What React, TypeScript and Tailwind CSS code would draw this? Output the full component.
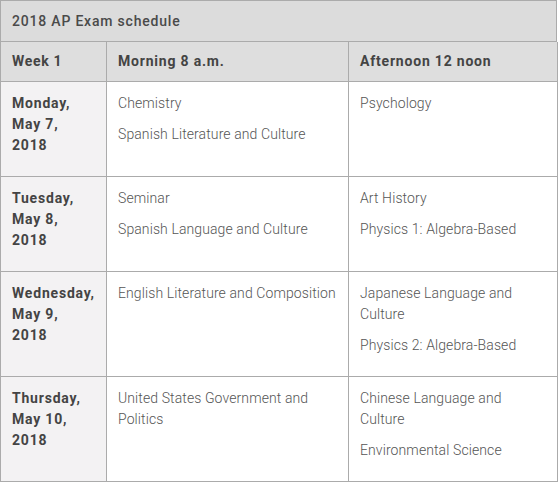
import React from "react";

const rows = [
  {
    day: ["Monday,", "May 7,", "2018"],
    am: ["Chemistry", "Spanish Literature and Culture"],
    pm: ["Psychology"],
  },
  {
    day: ["Tuesday,", "May 8,", "2018"],
    am: ["Seminar", "Spanish Language and Culture"],
    pm: ["Art History", "Physics 1: Algebra-Based"],
  },
  {
    day: ["Wednesday,", "May 9,", "2018"],
    am: ["English Literature and Composition"],
    pm: ["Japanese Language and Culture", "Physics 2: Algebra-Based"],
  },
  {
    day: ["Thursday,", "May 10,", "2018"],
    am: ["United States Government and Politics"],
    pm: ["Chinese Language and Culture", "Environmental Science"],
  },
];

export default function App() {
  return (
    <div
      className="w-[559px] h-[483px] bg-white text-[14px] leading-[21px]"
      style={{ fontFamily: "Roboto, 'Liberation Sans', sans-serif" }}
    >
      <div className="w-[557px] border-l border-t border-[#ababab]">
        <div className="h-[41px] bg-[#dcdcdc] border-r border-b border-[#ababab] px-[11px] flex items-center text-[#4a4a4a] font-medium tracking-[0.8px]">
          2018 AP Exam schedule
        </div>
        <div className="grid grid-cols-[106px_242px_209px]">
          <div className="h-[40px] bg-[#dedede] border-r border-b border-[#ababab] px-[11px] flex items-center font-bold text-[#444] tracking-[0.7px]">
            Week 1
          </div>
          <div className="h-[40px] bg-[#dedede] border-r border-b border-[#ababab] px-[11px] flex items-center font-bold text-[#444] tracking-[0.8px]">
            Morning 8 a.m.
          </div>
          <div className="h-[40px] bg-[#dedede] border-r border-b border-[#ababab] px-[11px] flex items-center font-bold text-[#444] tracking-[0.8px]">
            Afternoon 12 noon
          </div>
          {rows.map((r, i) => (
            <React.Fragment key={i}>
              <div className="bg-[#f3f2f3] border-r border-b border-[#ababab] pt-[11px] pb-[10px] px-[11px] font-bold text-[#444] tracking-[0.8px]">
                <p className="mb-[10px]">
                  {r.day.map((d, j) => (
                    <span key={j} className="block">
                      {d}
                    </span>
                  ))}
                </p>
              </div>
              <div className="bg-white border-r border-b border-[#ababab] pt-[11px] pb-[10px] pl-[11px] pr-[2px] text-[#555] font-light tracking-[0.1px]">
                {r.am.map((t, j) => (
                  <p key={j} className="mb-[10px]">
                    {t}
                  </p>
                ))}
              </div>
              <div className="bg-white border-r border-b border-[#ababab] pt-[11px] pb-[10px] pl-[11px] pr-[12px] text-[#555] font-light tracking-[0.1px]">
                {r.pm.map((t, j) => (
                  <p key={j} className="mb-[10px]">
                    {t}
                  </p>
                ))}
              </div>
            </React.Fragment>
          ))}
        </div>
      </div>
    </div>
  );
}
